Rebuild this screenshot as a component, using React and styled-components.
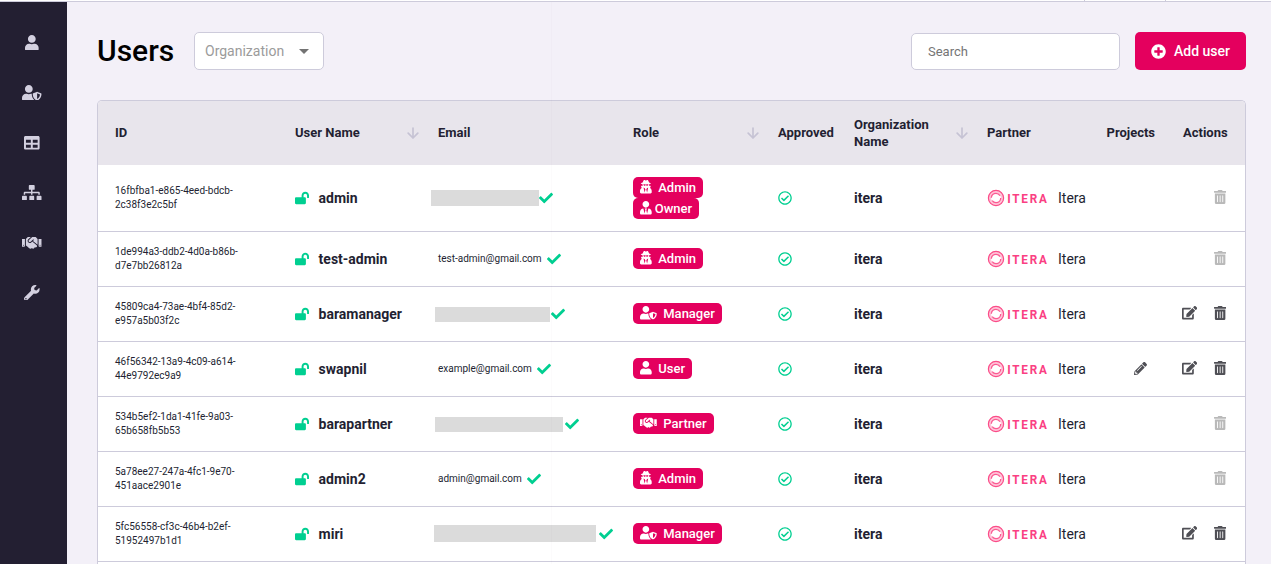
import React from "react";
import styled, { createGlobalStyle } from "styled-components";
import {
  FaUser, FaUserShield, FaTable, FaSitemap, FaHandshake, FaWrench, FaLockOpen, FaCheck,
  FaUserSecret, FaUserTie, FaRegCheckCircle, FaTrashAlt, FaEdit, FaPencilAlt, FaPlusCircle,
} from "react-icons/fa";

const Global = createGlobalStyle`
  * { box-sizing: border-box; }
  body { margin: 0; background: #f3f0f8; font-family: Roboto, "Liberation Sans", sans-serif; color: #231f32; }
  svg { display: block; flex: none; }
`;

const Page = styled.div`
  height: 564px;
  overflow: hidden;
  display: flex;
  flex-direction: column;
`;
const TopEdge = styled.div`
  height: 2px;
  flex: none;
  display: flex;
  justify-content: flex-end;
  gap: 80px;
  padding-right: 105px;
  background: #fff;
  border-bottom: 1px solid #cdcbdb;
`;
const Tick = styled.span`
  width: 1px;
  background: #cdcbdb;
`;
const Body = styled.div`
  flex: 1;
  min-height: 0;
  display: flex;
`;
const Sidebar = styled.nav`
  width: 67px;
  flex: none;
  background: #231f32;
  display: flex;
  flex-direction: column;
  align-items: center;
  padding: 15.500px 3px 0 0;
`;
const NavItem = styled.a`
  height: 50px;
  display: flex;
  align-items: center;
  color: #d3d0e0;
`;
const Glyph = styled.span`
  display: flex;
  svg {
    height: ${(p) => p.$h}px;
    width: ${(p) => p.$h * p.$ratio}px;
  }
`;
const Main = styled.main`
  position: relative;
  flex: 1;
  min-width: 0;
  display: flex;
  flex-direction: column;
  padding: 30px 25px 0 30px;
  &::after {
    content: "";
    position: absolute;
    top: 0;
    bottom: 0;
    left: 484px;
    width: 1px;
    background: rgba(35, 31, 50, 0.015);
  }
`;
const Toolbar = styled.header`
  height: 38px;
  flex: none;
  display: flex;
  align-items: center;
  margin-bottom: 30px;
`;
const Title = styled.h1`
  margin: 0 20px 0 0;
  width: 77px;
  font-size: 30px;
  line-height: 38px;
  font-weight: 500;
  color: #000;
`;
const Select = styled.div`
  width: 130px;
  height: 38px;
  border: 1px solid #cdcbdb;
  border-radius: 5px;
  background: #fff;
  display: flex;
  align-items: center;
  justify-content: space-between;
  padding: 0 14px 0 10px;
  font-size: 14px;
  color: #9b9b9b;
`;
const Caret = styled.i`
  border: 5px solid transparent;
  border-top-color: #737373;
  border-bottom: 0;
`;
const Search = styled.input`
  width: 209px;
  height: 37px;
  margin: 1px 15px 0 auto;
  border: 1px solid #cdcbdb;
  border-radius: 5px;
  background: #fff;
  padding: 0 16px;
  font: 400 13px Roboto, sans-serif;
  &::placeholder { color: #757575; opacity: 1; }
`;
const AddButton = styled.button`
  width: 111px;
  height: 38px;
  border: 0;
  border-radius: 5px;
  background: #e4005e;
  color: #fff;
  font: 500 14px Roboto, sans-serif;
  display: flex;
  align-items: center;
  gap: 8px;
  padding: 0 0 0 16px;
  white-space: nowrap;
`;
const Table = styled.section`
  flex: 1;
  min-height: 0;
  border: 1px solid #cdcbdb;
  border-bottom: 0;
  border-radius: 5px 5px 0 0;
  background: #fff;
  overflow: hidden;
`;
const Row = styled.div`
  display: grid;
  grid-template-columns: 180px 143px 195px 145px 76px 133px 119.5px 76.5px minmax(0, 1fr);
  align-items: center;
  padding-left: 17px;
  height: ${(p) => (p.$tall ? 67 : 55)}px;
  border-bottom: 1px solid #cdcbdb;
`;
const HeadRow = styled(Row)`
  height: 64px;
  padding-bottom: 1px;
  border-bottom: 0;
  background: #e8e5ec;
  font-size: 13px;
  line-height: 17px;
  font-weight: 700;
`;
const HeadCell = styled.div`
  display: flex;
  align-items: center;
  justify-content: space-between;
  padding-right: ${(p) => p.$inset || 0}px;
`;
const UserId = styled.div`
  width: 130px;
  font-size: 10px;
  line-height: 14px;
`;
const UserName = styled.div`
  display: flex;
  align-items: center;
  gap: 9.6px;
  font-size: 14px;
  font-weight: 700;
  svg { color: #00cf91; }
`;
const Email = styled.div`
  display: flex;
  align-items: center;
  gap: ${(p) => p.$gap}px;
  margin-left: ${(p) => p.$shift || 0}px;
  padding-bottom: 1px;
  font-size: 10px;
  svg { color: #00cf91; }
`;
const Redacted = styled.span`
  width: ${(p) => p.$w}px;
  height: ${(p) => p.$h}px;
  margin-top: ${(p) => (p.$h > 16 ? 0 : 1)}px;
  background: #dbdbdb;
`;
const Roles = styled.div`
  display: flex;
  flex-direction: column;
  align-items: flex-start;
  padding-bottom: ${(p) => (p.$single ? 1 : 0)}px;
`;
const Badge = styled.span`
  height: 21px;
  border-radius: 5px;
  background: #e4005e;
  color: #fff;
  display: flex;
  align-items: center;
  gap: ${(p) => (p.$tight ? 3 : 6.5)}px;
  padding: 0 7px;
  font-size: 13px;
  font-weight: 500;
  ${Glyph} { padding-bottom: 1px; }
`;
const Approved = styled.div`
  padding-bottom: 1px;
  color: #00cf91;
`;
const Organization = styled.div`
  font-size: 14px;
  font-weight: 700;
`;
const Partner = styled.div`
  display: flex;
  align-items: center;
  gap: 10px;
  font-size: 14px;
`;
const Actions = styled.div`
  display: flex;
  justify-content: flex-end;
  align-items: center;
  gap: 16.5px;
  padding: 0 19px 2px 0;
  color: ${(p) => (p.$disabled ? "#b9b9b9" : "#4f4f55")};
`;
const Projects = styled.div`
  padding: 0 0 2px 27px;
  color: #4f4f55;
`;

const SortArrow = () => (
  <svg width="12" height="12" viewBox="0 0 12 12" fill="none" stroke="#c6c3d4" strokeWidth="1.7" strokeLinecap="round" strokeLinejoin="round">
    <path d="M6 1v10M1.2 6.2L6 11l4.800-4.800" />
  </svg>
);

const PartnerLogo = () => (
  <svg width="61" height="18" viewBox="0 0 61 18">
    <circle cx="9" cy="9" r="6.300" fill="none" stroke="#ffc4d8" strokeWidth="3" />
    <circle cx="9" cy="9" r="7.600" fill="none" stroke="#fb4c88" strokeWidth="1.200" />
    <circle cx="9" cy="9" r="4.700" fill="#fff" stroke="#fb5b93" strokeWidth="1.300" strokeDasharray="11.500 3.200" />
    <text transform="translate(20.200 13.600) scale(.9 1)" fontFamily="Roboto, sans-serif" fontSize="13" fontWeight="700" fill="#fa4082" textLength="44" lengthAdjust="spacing">ITERA</text>
  </svg>
);

const roleIcons = {
  Admin: [FaUserSecret, 0.875],
  Owner: [FaUserTie, 0.875],
  Manager: [FaUserShield, 1.25],
  User: [FaUser, 0.875],
  Partner: [FaHandshake, 1.25],
};

const RoleBadge = ({ role }) => {
  const [Icon, ratio] = roleIcons[role];
  return (
    <Badge $tight={role === "Owner"}>
      <Glyph $h={13.4} $ratio={ratio}><Icon /></Glyph>
      {role}
    </Badge>
  );
};

const users = [
  { id: ["16fbfba1-e865-4eed-bdcb-", "2c38f3e2c5bf"], name: "admin", bar: [108, 16, -7, 0], roles: ["Admin", "Owner"] },
  { id: ["1de994a3-ddb2-4d0a-b86b-", "d7e7bb26812a"], name: "test-admin", email: "test-admin@gmail.com", roles: ["Admin"] },
  { id: ["45809ca4-73ae-4bf4-85d2-", "e957a5b03f2c"], name: "baramanager", bar: [115, 15, -3, 1], roles: ["Manager"], editable: true },
  { id: ["46f56342-13a9-4c09-a614-", "44e9792ec9a9"], name: "swapnil", email: "example@gmail.com", roles: ["User"], editable: true, projects: true },
  { id: ["534b5ef2-1da1-41fe-9a03-", "65b658fb5b53"], name: "barapartner", bar: [128, 15, -3, 2], roles: ["Partner"] },
  { id: ["5a78ee27-247a-4fc1-9e70-", "451aace2901e"], name: "admin2", email: "admin@gmail.com", roles: ["Admin"] },
  { id: ["5fc56558-cf3c-46b4-b2ef-", "51952497b1d1"], name: "miri", bar: [162, 17, -4, 2.5], roles: ["Manager"], editable: true },
];

const UserRow = ({ user }) => (
  <Row $tall={user.roles.length > 1}>
    <UserId>{user.id[0]}<br />{user.id[1]}</UserId>
    <UserName><FaLockOpen size={14} />{user.name}</UserName>
    <Email $gap={user.bar ? user.bar[3] : 5} $shift={user.bar && user.bar[2]}>
      {user.bar ? <Redacted $w={user.bar[0]} $h={user.bar[1]} /> : user.email}
      <FaCheck size={14} />
    </Email>
    <Roles $single={user.roles.length === 1}>{user.roles.map((r) => <RoleBadge key={r} role={r} />)}</Roles>
    <Approved><FaRegCheckCircle size={14} /></Approved>
    <Organization>itera</Organization>
    <Partner><PartnerLogo />Itera</Partner>
    <Projects>{user.projects && <FaPencilAlt size={13} />}</Projects>
    <Actions $disabled={!user.editable}>
      {user.editable && <Glyph $h={13.5} $ratio={1.125}><FaEdit /></Glyph>}
      <Glyph $h={14} $ratio={0.875}><FaTrashAlt /></Glyph>
    </Actions>
  </Row>
);

const navIcons = [
  [FaUser, 0.875], [FaUserShield, 1.25], [FaTable, 1], [FaSitemap, 1.25], [FaHandshake, 1.25], [FaWrench, 1],
];

export default function App() {
  return (
    <Page>
      <Global />
      <TopEdge><Tick /><Tick /></TopEdge>
      <Body>
        <Sidebar>
          {navIcons.map(([Icon, ratio], i) => (
            <NavItem key={i}><Glyph $h={15.6} $ratio={ratio}><Icon /></Glyph></NavItem>
          ))}
        </Sidebar>
        <Main>
          <Toolbar>
            <Title>Users</Title>
            <Select>Organization<Caret /></Select>
            <Search placeholder="Search" />
            <AddButton><FaPlusCircle size={15} />Add user</AddButton>
          </Toolbar>
          <Table>
            <HeadRow>
              <HeadCell>ID</HeadCell>
              <HeadCell $inset={19}>User Name<SortArrow /></HeadCell>
              <HeadCell>Email</HeadCell>
              <HeadCell $inset={19}>Role<SortArrow /></HeadCell>
              <HeadCell>Approved</HeadCell>
              <HeadCell $inset={19}><span>Organization<br />Name</span><SortArrow /></HeadCell>
              <HeadCell>Partner</HeadCell>
              <HeadCell>Projects</HeadCell>
              <HeadCell>Actions</HeadCell>
            </HeadRow>
            {users.map((u) => <UserRow key={u.name} user={u} />)}
          </Table>
        </Main>
      </Body>
    </Page>
  );
}
